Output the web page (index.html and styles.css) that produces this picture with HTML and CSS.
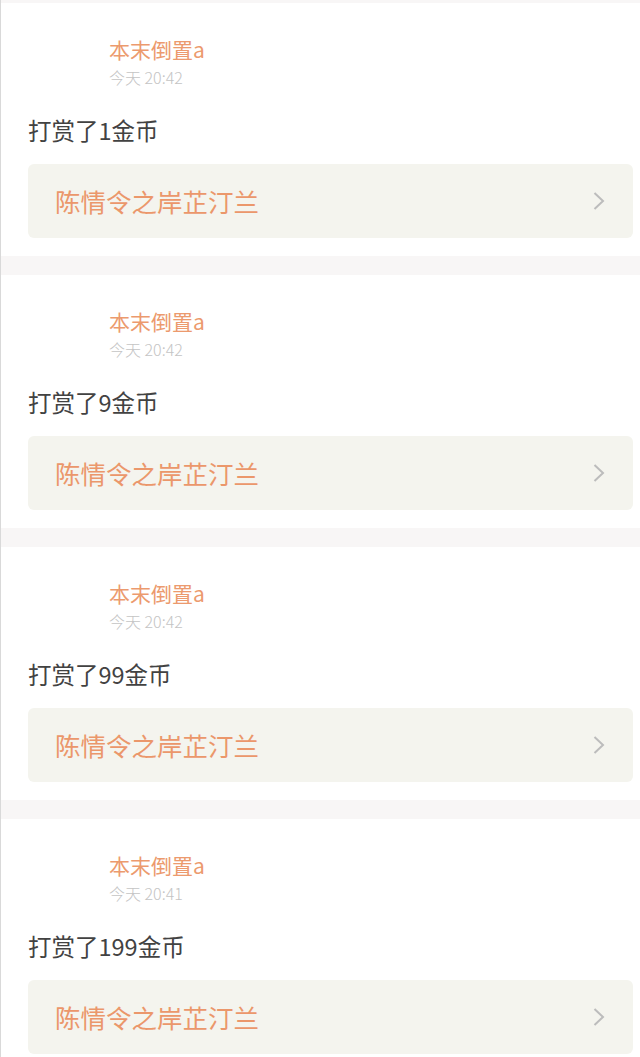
FILE: index.html
```html
<!DOCTYPE html>
<html lang="zh-CN">
<head>
    <meta charset="UTF-8">
    <meta name="viewport" content="width=device-width, initial-scale=1.0">
    <title>打赏记录</title>
    <link rel="stylesheet" href="styles.css">
</head>
<body>

<!-- 打赏记录列表 -->
<div class="list">
    <div class="item">
        <div class="name">本末倒置a</div>
        <div class="time">今天 20:42</div>
        <div class="content">打赏了1金币</div>
        <a class="work" href="#">
            <span class="work-title">陈情令之岸芷汀兰</span>
            <svg class="arrow" width="12" height="20" viewBox="0 0 12 20"><path d="M1.5 2 L10 10 L1.5 18" fill="none" stroke="#bcbcbc" stroke-width="2"/></svg>
        </a>
    </div>
    <div class="item">
        <div class="name">本末倒置a</div>
        <div class="time">今天 20:42</div>
        <div class="content">打赏了9金币</div>
        <a class="work" href="#">
            <span class="work-title">陈情令之岸芷汀兰</span>
            <svg class="arrow" width="12" height="20" viewBox="0 0 12 20"><path d="M1.5 2 L10 10 L1.5 18" fill="none" stroke="#bcbcbc" stroke-width="2"/></svg>
        </a>
    </div>
    <div class="item">
        <div class="name">本末倒置a</div>
        <div class="time">今天 20:42</div>
        <div class="content">打赏了99金币</div>
        <a class="work" href="#">
            <span class="work-title">陈情令之岸芷汀兰</span>
            <svg class="arrow" width="12" height="20" viewBox="0 0 12 20"><path d="M1.5 2 L10 10 L1.5 18" fill="none" stroke="#bcbcbc" stroke-width="2"/></svg>
        </a>
    </div>
    <div class="item">
        <div class="name">本末倒置a</div>
        <div class="time">今天 20:41</div>
        <div class="content">打赏了199金币</div>
        <a class="work" href="#">
            <span class="work-title">陈情令之岸芷汀兰</span>
            <svg class="arrow" width="12" height="20" viewBox="0 0 12 20"><path d="M1.5 2 L10 10 L1.5 18" fill="none" stroke="#bcbcbc" stroke-width="2"/></svg>
        </a>
    </div>
</div>

</body>
</html>
```

FILE: styles.css
```css
body {
    margin: 0;
    font-family: "Noto Sans CJK SC", "Noto Sans", sans-serif;
    background-color: #f8f6f6;
    border-left: 1px solid #d9d9d9;
}
.list {
    padding-top: 3px;
    display: flex;
    flex-direction: column;
    gap: 19px;
}
.item {
    background-color: #fff;
    padding: 32px 7px 18px 27px;
}
.name {
    margin-left: 81px;
    font-size: 21px;
    line-height: 28px;
    color: #ec9a6e;
}
.time {
    margin-left: 81px;
    margin-top: 4px;
    font-size: 16px;
    font-weight: 300;
    line-height: 20px;
    color: #c4c4c4;
}
.content {
    margin-top: 28px;
    font-size: 23.5px;
    line-height: 30px;
    color: #424242;
}
.work {
    margin-top: 19px;
    height: 74px;
    display: flex;
    align-items: center;
    justify-content: space-between;
    padding: 0 28px 0 27px;
    background-color: #f4f4ee;
    border-radius: 6px;
    text-decoration: none;
}
.work-title {
    font-size: 25.5px;
    line-height: 34px;
    color: #eb976b;
}
.arrow {
    display: block;
}
```
